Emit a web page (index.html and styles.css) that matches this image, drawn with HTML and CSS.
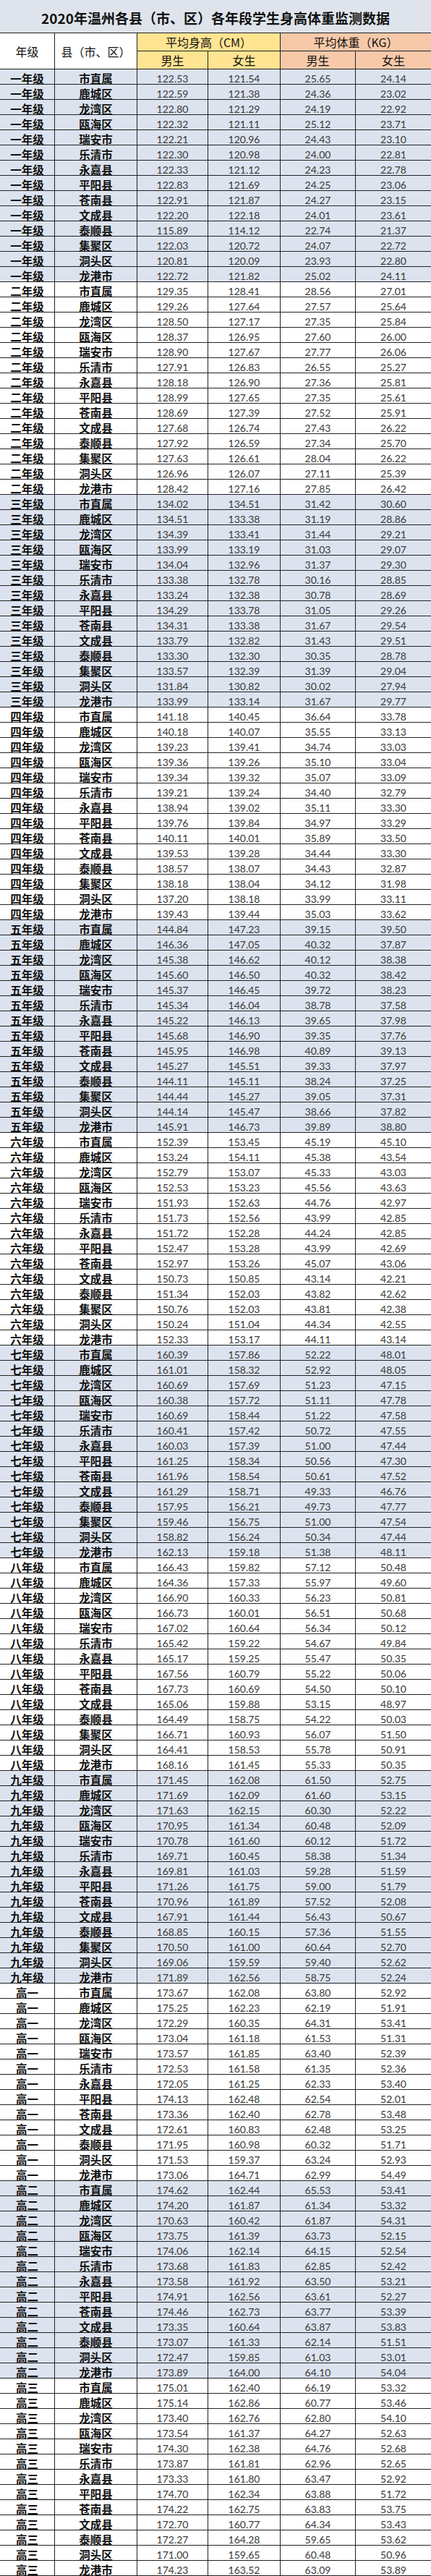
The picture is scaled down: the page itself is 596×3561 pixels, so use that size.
FILE: index.html
```html
<!DOCTYPE html>
<html lang="zh-CN">
<head>
<meta charset="utf-8">
<title>2020年温州各县（市、区）各年段学生身高体重监测数据</title>
<link rel="stylesheet" href="styles.css">
</head>
<body>
<div class="sheet">
  <div class="title">2020年温州各县（市、区）各年段学生身高体重监测数据</div>
  <div class="head">
    <div class="h-grade">年级</div>
    <div class="h-county">县（市、区）</div>
    <div class="h-height">平均身高（CM）</div>
    <div class="h-weight">平均体重（KG）</div>
    <div class="h-sub yellow">男生</div>
    <div class="h-sub yellow">女生</div>
    <div class="h-sub orange">男生</div>
    <div class="h-sub orange last">女生</div>
  </div>
  <div class="body">
<div class="row band"><span>一年级</span><span>市直属</span><span>122.53</span><span>121.54</span><span>25.65</span><span>24.14</span></div>
<div class="row band"><span>一年级</span><span>鹿城区</span><span>122.59</span><span>121.38</span><span>24.36</span><span>23.02</span></div>
<div class="row band"><span>一年级</span><span>龙湾区</span><span>122.80</span><span>121.29</span><span>24.19</span><span>22.92</span></div>
<div class="row band"><span>一年级</span><span>瓯海区</span><span>122.32</span><span>121.11</span><span>25.12</span><span>23.71</span></div>
<div class="row band"><span>一年级</span><span>瑞安市</span><span>122.21</span><span>120.96</span><span>24.43</span><span>23.10</span></div>
<div class="row band"><span>一年级</span><span>乐清市</span><span>122.30</span><span>120.98</span><span>24.00</span><span>22.81</span></div>
<div class="row band"><span>一年级</span><span>永嘉县</span><span>122.33</span><span>121.12</span><span>24.23</span><span>22.78</span></div>
<div class="row band"><span>一年级</span><span>平阳县</span><span>122.83</span><span>121.69</span><span>24.25</span><span>23.06</span></div>
<div class="row band"><span>一年级</span><span>苍南县</span><span>122.91</span><span>121.87</span><span>24.27</span><span>23.15</span></div>
<div class="row band"><span>一年级</span><span>文成县</span><span>122.20</span><span>122.18</span><span>24.01</span><span>23.61</span></div>
<div class="row band"><span>一年级</span><span>泰顺县</span><span>115.89</span><span>114.12</span><span>22.74</span><span>21.37</span></div>
<div class="row band"><span>一年级</span><span>集聚区</span><span>122.03</span><span>120.72</span><span>24.07</span><span>22.72</span></div>
<div class="row band"><span>一年级</span><span>洞头区</span><span>120.81</span><span>120.09</span><span>23.93</span><span>22.80</span></div>
<div class="row band"><span>一年级</span><span>龙港市</span><span>122.72</span><span>121.82</span><span>25.02</span><span>24.11</span></div>
<div class="row"><span>二年级</span><span>市直属</span><span>129.35</span><span>128.41</span><span>28.56</span><span>27.01</span></div>
<div class="row"><span>二年级</span><span>鹿城区</span><span>129.26</span><span>127.64</span><span>27.57</span><span>25.64</span></div>
<div class="row"><span>二年级</span><span>龙湾区</span><span>128.50</span><span>127.17</span><span>27.35</span><span>25.84</span></div>
<div class="row"><span>二年级</span><span>瓯海区</span><span>128.37</span><span>126.95</span><span>27.60</span><span>26.00</span></div>
<div class="row"><span>二年级</span><span>瑞安市</span><span>128.90</span><span>127.67</span><span>27.77</span><span>26.06</span></div>
<div class="row"><span>二年级</span><span>乐清市</span><span>127.91</span><span>126.83</span><span>26.55</span><span>25.27</span></div>
<div class="row"><span>二年级</span><span>永嘉县</span><span>128.18</span><span>126.90</span><span>27.36</span><span>25.81</span></div>
<div class="row"><span>二年级</span><span>平阳县</span><span>128.99</span><span>127.65</span><span>27.35</span><span>25.61</span></div>
<div class="row"><span>二年级</span><span>苍南县</span><span>128.69</span><span>127.39</span><span>27.52</span><span>25.91</span></div>
<div class="row"><span>二年级</span><span>文成县</span><span>127.68</span><span>126.74</span><span>27.43</span><span>26.22</span></div>
<div class="row"><span>二年级</span><span>泰顺县</span><span>127.92</span><span>126.59</span><span>27.34</span><span>25.70</span></div>
<div class="row"><span>二年级</span><span>集聚区</span><span>127.63</span><span>126.61</span><span>28.04</span><span>26.22</span></div>
<div class="row"><span>二年级</span><span>洞头区</span><span>126.96</span><span>126.07</span><span>27.11</span><span>25.39</span></div>
<div class="row"><span>二年级</span><span>龙港市</span><span>128.42</span><span>127.16</span><span>27.85</span><span>26.42</span></div>
<div class="row band"><span>三年级</span><span>市直属</span><span>134.02</span><span>134.51</span><span>31.42</span><span>30.60</span></div>
<div class="row band"><span>三年级</span><span>鹿城区</span><span>134.51</span><span>133.38</span><span>31.19</span><span>28.86</span></div>
<div class="row band"><span>三年级</span><span>龙湾区</span><span>134.39</span><span>133.41</span><span>31.44</span><span>29.21</span></div>
<div class="row band"><span>三年级</span><span>瓯海区</span><span>133.99</span><span>133.19</span><span>31.03</span><span>29.07</span></div>
<div class="row band"><span>三年级</span><span>瑞安市</span><span>134.04</span><span>132.96</span><span>31.37</span><span>29.30</span></div>
<div class="row band"><span>三年级</span><span>乐清市</span><span>133.38</span><span>132.78</span><span>30.16</span><span>28.85</span></div>
<div class="row band"><span>三年级</span><span>永嘉县</span><span>133.24</span><span>132.38</span><span>30.78</span><span>28.69</span></div>
<div class="row band"><span>三年级</span><span>平阳县</span><span>134.29</span><span>133.78</span><span>31.05</span><span>29.26</span></div>
<div class="row band"><span>三年级</span><span>苍南县</span><span>134.31</span><span>133.38</span><span>31.67</span><span>29.54</span></div>
<div class="row band"><span>三年级</span><span>文成县</span><span>133.79</span><span>132.82</span><span>31.43</span><span>29.51</span></div>
<div class="row band"><span>三年级</span><span>泰顺县</span><span>133.30</span><span>132.30</span><span>30.35</span><span>28.78</span></div>
<div class="row band"><span>三年级</span><span>集聚区</span><span>133.57</span><span>132.39</span><span>31.39</span><span>29.04</span></div>
<div class="row band"><span>三年级</span><span>洞头区</span><span>131.84</span><span>130.82</span><span>30.02</span><span>27.94</span></div>
<div class="row band"><span>三年级</span><span>龙港市</span><span>133.99</span><span>133.14</span><span>31.67</span><span>29.77</span></div>
<div class="row"><span>四年级</span><span>市直属</span><span>141.18</span><span>140.45</span><span>36.64</span><span>33.78</span></div>
<div class="row"><span>四年级</span><span>鹿城区</span><span>140.18</span><span>140.07</span><span>35.55</span><span>33.13</span></div>
<div class="row"><span>四年级</span><span>龙湾区</span><span>139.23</span><span>139.41</span><span>34.74</span><span>33.03</span></div>
<div class="row"><span>四年级</span><span>瓯海区</span><span>139.36</span><span>139.26</span><span>35.10</span><span>33.04</span></div>
<div class="row"><span>四年级</span><span>瑞安市</span><span>139.34</span><span>139.32</span><span>35.07</span><span>33.09</span></div>
<div class="row"><span>四年级</span><span>乐清市</span><span>139.21</span><span>139.24</span><span>34.40</span><span>32.79</span></div>
<div class="row"><span>四年级</span><span>永嘉县</span><span>138.94</span><span>139.02</span><span>35.11</span><span>33.30</span></div>
<div class="row"><span>四年级</span><span>平阳县</span><span>139.76</span><span>139.84</span><span>34.97</span><span>33.29</span></div>
<div class="row"><span>四年级</span><span>苍南县</span><span>140.11</span><span>140.01</span><span>35.89</span><span>33.50</span></div>
<div class="row"><span>四年级</span><span>文成县</span><span>139.53</span><span>139.28</span><span>34.44</span><span>33.30</span></div>
<div class="row"><span>四年级</span><span>泰顺县</span><span>138.57</span><span>138.07</span><span>34.43</span><span>32.87</span></div>
<div class="row"><span>四年级</span><span>集聚区</span><span>138.18</span><span>138.04</span><span>34.12</span><span>31.98</span></div>
<div class="row"><span>四年级</span><span>洞头区</span><span>137.20</span><span>138.18</span><span>33.99</span><span>33.11</span></div>
<div class="row"><span>四年级</span><span>龙港市</span><span>139.43</span><span>139.44</span><span>35.03</span><span>33.62</span></div>
<div class="row band"><span>五年级</span><span>市直属</span><span>144.84</span><span>147.23</span><span>39.15</span><span>39.50</span></div>
<div class="row band"><span>五年级</span><span>鹿城区</span><span>146.36</span><span>147.05</span><span>40.32</span><span>37.87</span></div>
<div class="row band"><span>五年级</span><span>龙湾区</span><span>145.38</span><span>146.62</span><span>40.12</span><span>38.38</span></div>
<div class="row band"><span>五年级</span><span>瓯海区</span><span>145.60</span><span>146.50</span><span>40.32</span><span>38.42</span></div>
<div class="row band"><span>五年级</span><span>瑞安市</span><span>145.37</span><span>146.45</span><span>39.72</span><span>38.23</span></div>
<div class="row band"><span>五年级</span><span>乐清市</span><span>145.34</span><span>146.04</span><span>38.78</span><span>37.58</span></div>
<div class="row band"><span>五年级</span><span>永嘉县</span><span>145.22</span><span>146.13</span><span>39.65</span><span>37.98</span></div>
<div class="row band"><span>五年级</span><span>平阳县</span><span>145.68</span><span>146.90</span><span>39.35</span><span>37.76</span></div>
<div class="row band"><span>五年级</span><span>苍南县</span><span>145.95</span><span>146.98</span><span>40.89</span><span>39.13</span></div>
<div class="row band"><span>五年级</span><span>文成县</span><span>145.27</span><span>145.51</span><span>39.33</span><span>37.97</span></div>
<div class="row band"><span>五年级</span><span>泰顺县</span><span>144.11</span><span>145.11</span><span>38.24</span><span>37.25</span></div>
<div class="row band"><span>五年级</span><span>集聚区</span><span>144.44</span><span>145.27</span><span>39.05</span><span>37.31</span></div>
<div class="row band"><span>五年级</span><span>洞头区</span><span>144.14</span><span>145.47</span><span>38.66</span><span>37.82</span></div>
<div class="row band"><span>五年级</span><span>龙港市</span><span>145.91</span><span>146.73</span><span>39.89</span><span>38.80</span></div>
<div class="row"><span>六年级</span><span>市直属</span><span>152.39</span><span>153.45</span><span>45.19</span><span>45.10</span></div>
<div class="row"><span>六年级</span><span>鹿城区</span><span>153.24</span><span>154.11</span><span>45.38</span><span>43.54</span></div>
<div class="row"><span>六年级</span><span>龙湾区</span><span>152.79</span><span>153.07</span><span>45.33</span><span>43.03</span></div>
<div class="row"><span>六年级</span><span>瓯海区</span><span>152.53</span><span>153.23</span><span>45.56</span><span>43.63</span></div>
<div class="row"><span>六年级</span><span>瑞安市</span><span>151.93</span><span>152.63</span><span>44.76</span><span>42.97</span></div>
<div class="row"><span>六年级</span><span>乐清市</span><span>151.73</span><span>152.56</span><span>43.99</span><span>42.85</span></div>
<div class="row"><span>六年级</span><span>永嘉县</span><span>151.72</span><span>152.28</span><span>44.24</span><span>42.85</span></div>
<div class="row"><span>六年级</span><span>平阳县</span><span>152.47</span><span>153.28</span><span>43.99</span><span>42.69</span></div>
<div class="row"><span>六年级</span><span>苍南县</span><span>152.97</span><span>153.26</span><span>45.07</span><span>43.06</span></div>
<div class="row"><span>六年级</span><span>文成县</span><span>150.73</span><span>150.85</span><span>43.14</span><span>42.21</span></div>
<div class="row"><span>六年级</span><span>泰顺县</span><span>151.34</span><span>152.03</span><span>43.82</span><span>42.62</span></div>
<div class="row"><span>六年级</span><span>集聚区</span><span>150.76</span><span>152.03</span><span>43.81</span><span>42.38</span></div>
<div class="row"><span>六年级</span><span>洞头区</span><span>150.24</span><span>151.04</span><span>44.34</span><span>42.55</span></div>
<div class="row"><span>六年级</span><span>龙港市</span><span>152.33</span><span>153.17</span><span>44.11</span><span>43.14</span></div>
<div class="row band"><span>七年级</span><span>市直属</span><span>160.39</span><span>157.86</span><span>52.22</span><span>48.01</span></div>
<div class="row band"><span>七年级</span><span>鹿城区</span><span>161.01</span><span>158.32</span><span>52.92</span><span>48.05</span></div>
<div class="row band"><span>七年级</span><span>龙湾区</span><span>160.69</span><span>157.69</span><span>51.23</span><span>47.15</span></div>
<div class="row band"><span>七年级</span><span>瓯海区</span><span>160.38</span><span>157.72</span><span>51.11</span><span>47.78</span></div>
<div class="row band"><span>七年级</span><span>瑞安市</span><span>160.69</span><span>158.44</span><span>51.22</span><span>47.58</span></div>
<div class="row band"><span>七年级</span><span>乐清市</span><span>160.41</span><span>157.42</span><span>50.72</span><span>47.55</span></div>
<div class="row band"><span>七年级</span><span>永嘉县</span><span>160.03</span><span>157.39</span><span>51.00</span><span>47.44</span></div>
<div class="row band"><span>七年级</span><span>平阳县</span><span>161.25</span><span>158.34</span><span>50.56</span><span>47.30</span></div>
<div class="row band"><span>七年级</span><span>苍南县</span><span>161.96</span><span>158.54</span><span>50.61</span><span>47.52</span></div>
<div class="row band"><span>七年级</span><span>文成县</span><span>161.29</span><span>158.71</span><span>49.33</span><span>46.76</span></div>
<div class="row band"><span>七年级</span><span>泰顺县</span><span>157.95</span><span>156.21</span><span>49.73</span><span>47.77</span></div>
<div class="row band"><span>七年级</span><span>集聚区</span><span>159.46</span><span>156.75</span><span>51.00</span><span>47.54</span></div>
<div class="row band"><span>七年级</span><span>洞头区</span><span>158.82</span><span>156.24</span><span>50.34</span><span>47.44</span></div>
<div class="row band"><span>七年级</span><span>龙港市</span><span>162.13</span><span>159.18</span><span>51.38</span><span>48.11</span></div>
<div class="row"><span>八年级</span><span>市直属</span><span>166.43</span><span>159.82</span><span>57.12</span><span>50.48</span></div>
<div class="row"><span>八年级</span><span>鹿城区</span><span>164.36</span><span>157.33</span><span>55.97</span><span>49.60</span></div>
<div class="row"><span>八年级</span><span>龙湾区</span><span>166.90</span><span>160.33</span><span>56.23</span><span>50.81</span></div>
<div class="row"><span>八年级</span><span>瓯海区</span><span>166.73</span><span>160.01</span><span>56.51</span><span>50.68</span></div>
<div class="row"><span>八年级</span><span>瑞安市</span><span>167.02</span><span>160.64</span><span>56.34</span><span>50.12</span></div>
<div class="row"><span>八年级</span><span>乐清市</span><span>165.42</span><span>159.22</span><span>54.67</span><span>49.84</span></div>
<div class="row"><span>八年级</span><span>永嘉县</span><span>165.17</span><span>159.25</span><span>55.47</span><span>50.35</span></div>
<div class="row"><span>八年级</span><span>平阳县</span><span>167.56</span><span>160.79</span><span>55.22</span><span>50.06</span></div>
<div class="row"><span>八年级</span><span>苍南县</span><span>167.73</span><span>160.69</span><span>54.50</span><span>50.10</span></div>
<div class="row"><span>八年级</span><span>文成县</span><span>165.06</span><span>159.88</span><span>53.15</span><span>48.97</span></div>
<div class="row"><span>八年级</span><span>泰顺县</span><span>164.49</span><span>158.75</span><span>54.22</span><span>50.03</span></div>
<div class="row"><span>八年级</span><span>集聚区</span><span>166.71</span><span>160.93</span><span>56.07</span><span>51.50</span></div>
<div class="row"><span>八年级</span><span>洞头区</span><span>164.41</span><span>158.53</span><span>55.78</span><span>50.91</span></div>
<div class="row"><span>八年级</span><span>龙港市</span><span>168.16</span><span>161.45</span><span>55.33</span><span>50.35</span></div>
<div class="row band"><span>九年级</span><span>市直属</span><span>171.45</span><span>162.08</span><span>61.50</span><span>52.75</span></div>
<div class="row band"><span>九年级</span><span>鹿城区</span><span>171.69</span><span>162.09</span><span>61.60</span><span>53.15</span></div>
<div class="row band"><span>九年级</span><span>龙湾区</span><span>171.63</span><span>162.15</span><span>60.30</span><span>52.22</span></div>
<div class="row band"><span>九年级</span><span>瓯海区</span><span>170.95</span><span>161.34</span><span>60.48</span><span>52.09</span></div>
<div class="row band"><span>九年级</span><span>瑞安市</span><span>170.78</span><span>161.60</span><span>60.12</span><span>51.72</span></div>
<div class="row band"><span>九年级</span><span>乐清市</span><span>169.71</span><span>160.45</span><span>58.38</span><span>51.34</span></div>
<div class="row band"><span>九年级</span><span>永嘉县</span><span>169.81</span><span>161.03</span><span>59.28</span><span>51.59</span></div>
<div class="row band"><span>九年级</span><span>平阳县</span><span>171.26</span><span>161.75</span><span>59.00</span><span>51.79</span></div>
<div class="row band"><span>九年级</span><span>苍南县</span><span>170.96</span><span>161.89</span><span>57.52</span><span>52.08</span></div>
<div class="row band"><span>九年级</span><span>文成县</span><span>167.91</span><span>161.44</span><span>56.43</span><span>50.67</span></div>
<div class="row band"><span>九年级</span><span>泰顺县</span><span>168.85</span><span>160.15</span><span>57.36</span><span>51.55</span></div>
<div class="row band"><span>九年级</span><span>集聚区</span><span>170.50</span><span>161.00</span><span>60.64</span><span>52.70</span></div>
<div class="row band"><span>九年级</span><span>洞头区</span><span>169.06</span><span>159.59</span><span>59.40</span><span>52.62</span></div>
<div class="row band"><span>九年级</span><span>龙港市</span><span>171.89</span><span>162.56</span><span>58.75</span><span>52.24</span></div>
<div class="row"><span>高一</span><span>市直属</span><span>173.67</span><span>162.08</span><span>63.80</span><span>52.92</span></div>
<div class="row"><span>高一</span><span>鹿城区</span><span>175.25</span><span>162.23</span><span>62.19</span><span>51.91</span></div>
<div class="row"><span>高一</span><span>龙湾区</span><span>172.29</span><span>160.35</span><span>64.31</span><span>53.41</span></div>
<div class="row"><span>高一</span><span>瓯海区</span><span>173.04</span><span>161.18</span><span>61.53</span><span>51.31</span></div>
<div class="row"><span>高一</span><span>瑞安市</span><span>173.57</span><span>161.85</span><span>63.40</span><span>52.39</span></div>
<div class="row"><span>高一</span><span>乐清市</span><span>172.53</span><span>161.58</span><span>61.35</span><span>52.36</span></div>
<div class="row"><span>高一</span><span>永嘉县</span><span>172.05</span><span>161.25</span><span>62.33</span><span>53.40</span></div>
<div class="row"><span>高一</span><span>平阳县</span><span>174.13</span><span>162.48</span><span>62.54</span><span>52.01</span></div>
<div class="row"><span>高一</span><span>苍南县</span><span>173.36</span><span>162.40</span><span>62.78</span><span>53.48</span></div>
<div class="row"><span>高一</span><span>文成县</span><span>172.61</span><span>160.83</span><span>62.48</span><span>53.25</span></div>
<div class="row"><span>高一</span><span>泰顺县</span><span>171.95</span><span>160.98</span><span>60.32</span><span>51.71</span></div>
<div class="row"><span>高一</span><span>洞头区</span><span>171.53</span><span>159.37</span><span>63.24</span><span>52.93</span></div>
<div class="row"><span>高一</span><span>龙港市</span><span>173.06</span><span>164.71</span><span>62.99</span><span>54.49</span></div>
<div class="row band"><span>高二</span><span>市直属</span><span>174.62</span><span>162.44</span><span>65.53</span><span>53.41</span></div>
<div class="row band"><span>高二</span><span>鹿城区</span><span>174.20</span><span>161.87</span><span>61.34</span><span>53.32</span></div>
<div class="row band"><span>高二</span><span>龙湾区</span><span>170.63</span><span>160.42</span><span>61.87</span><span>54.31</span></div>
<div class="row band"><span>高二</span><span>瓯海区</span><span>173.75</span><span>161.39</span><span>63.73</span><span>52.15</span></div>
<div class="row band"><span>高二</span><span>瑞安市</span><span>174.06</span><span>162.14</span><span>64.15</span><span>52.54</span></div>
<div class="row band"><span>高二</span><span>乐清市</span><span>173.68</span><span>161.83</span><span>62.85</span><span>52.42</span></div>
<div class="row band"><span>高二</span><span>永嘉县</span><span>173.58</span><span>161.92</span><span>63.50</span><span>53.21</span></div>
<div class="row band"><span>高二</span><span>平阳县</span><span>174.91</span><span>162.56</span><span>63.61</span><span>52.27</span></div>
<div class="row band"><span>高二</span><span>苍南县</span><span>174.46</span><span>162.73</span><span>63.77</span><span>53.39</span></div>
<div class="row band"><span>高二</span><span>文成县</span><span>173.35</span><span>160.64</span><span>63.87</span><span>53.83</span></div>
<div class="row band"><span>高二</span><span>泰顺县</span><span>173.07</span><span>161.33</span><span>62.14</span><span>51.51</span></div>
<div class="row band"><span>高二</span><span>洞头区</span><span>172.47</span><span>159.85</span><span>61.03</span><span>53.01</span></div>
<div class="row band"><span>高二</span><span>龙港市</span><span>173.89</span><span>164.00</span><span>64.10</span><span>54.04</span></div>
<div class="row"><span>高三</span><span>市直属</span><span>175.01</span><span>162.40</span><span>66.19</span><span>53.32</span></div>
<div class="row"><span>高三</span><span>鹿城区</span><span>175.14</span><span>162.86</span><span>60.77</span><span>53.46</span></div>
<div class="row"><span>高三</span><span>龙湾区</span><span>173.40</span><span>162.76</span><span>62.80</span><span>54.10</span></div>
<div class="row"><span>高三</span><span>瓯海区</span><span>173.54</span><span>161.37</span><span>64.27</span><span>52.63</span></div>
<div class="row"><span>高三</span><span>瑞安市</span><span>174.30</span><span>162.38</span><span>64.76</span><span>52.68</span></div>
<div class="row"><span>高三</span><span>乐清市</span><span>173.87</span><span>161.81</span><span>62.96</span><span>52.65</span></div>
<div class="row"><span>高三</span><span>永嘉县</span><span>173.33</span><span>161.80</span><span>63.47</span><span>52.92</span></div>
<div class="row"><span>高三</span><span>平阳县</span><span>174.70</span><span>162.34</span><span>63.88</span><span>51.72</span></div>
<div class="row"><span>高三</span><span>苍南县</span><span>174.22</span><span>162.75</span><span>63.83</span><span>53.75</span></div>
<div class="row"><span>高三</span><span>文成县</span><span>172.70</span><span>160.77</span><span>64.34</span><span>53.43</span></div>
<div class="row"><span>高三</span><span>泰顺县</span><span>172.27</span><span>164.28</span><span>59.65</span><span>53.62</span></div>
<div class="row"><span>高三</span><span>洞头区</span><span>171.00</span><span>159.65</span><span>60.48</span><span>50.96</span></div>
<div class="row"><span>高三</span><span>龙港市</span><span>174.23</span><span>163.52</span><span>63.09</span><span>53.89</span></div>
  </div>
</div>
</body>
</html>
```
FILE: styles.css
```css
html, body {
  margin: 0;
  padding: 0;
  background: #ffffff;
}

.sheet {
  width: 596px;
  font-family: "Noto Sans CJK SC", "Noto Sans", sans-serif;
  color: #111;
}

.title {
  height: 46px;
  box-sizing: border-box;
  padding-top: 3px;
  background: #dfe4ec;
  border-bottom: 1px solid #222;
  display: flex;
  align-items: center;
  justify-content: center;
  font-size: 19px;
  font-weight: 700;
  letter-spacing: 0;
  color: #111;
}

.head {
  display: grid;
  grid-template-columns: 76px 114px 98px 100px 104px 1fr;
  grid-template-rows: 25px 25px;
  background: #fff;
}

.head > div {
  box-sizing: border-box;
  border-right: 1px solid #222;
  border-bottom: 1px solid #222;
  display: flex;
  align-items: center;
  justify-content: center;
  font-size: 16px;
  color: #111;
}

.h-grade {
  grid-row: 1 / 3;
  grid-column: 1;
}

.h-county {
  grid-row: 1 / 3;
  grid-column: 2;
}

.h-height {
  grid-row: 1;
  grid-column: 3 / 5;
  background: #ffe491;
}

.h-weight {
  grid-row: 1;
  grid-column: 5 / 7;
  background: #f7c9a9;
}

.head > .h-weight,
.head > .last {
  border-right: none;
}

.h-sub.yellow {
  background: #ffe491;
}

.h-sub.orange {
  background: #f7c9a9;
}

.row {
  display: grid;
  grid-template-columns: 76px 114px 98px 100px 104px 1fr;
  height: 21px;
  box-sizing: border-box;
  border-bottom: 1px solid #222;
}

.row.band {
  background: #dce3ef;
}

.row > span {
  box-sizing: border-box;
  border-right: 1px solid #222;
  display: flex;
  align-items: center;
  justify-content: center;
  padding-top: 1px;
  font-family: "Lato", "Liberation Sans", sans-serif;
  font-size: 14px;
  color: #3a3a3a;
}

.row > span:last-child {
  border-right: none;
}

.row > span:nth-child(1),
.row > span:nth-child(2) {
  font-family: "Noto Sans CJK SC", "Noto Sans", sans-serif;
  font-size: 15.5px;
  font-weight: 700;
  color: #111;
}
```
